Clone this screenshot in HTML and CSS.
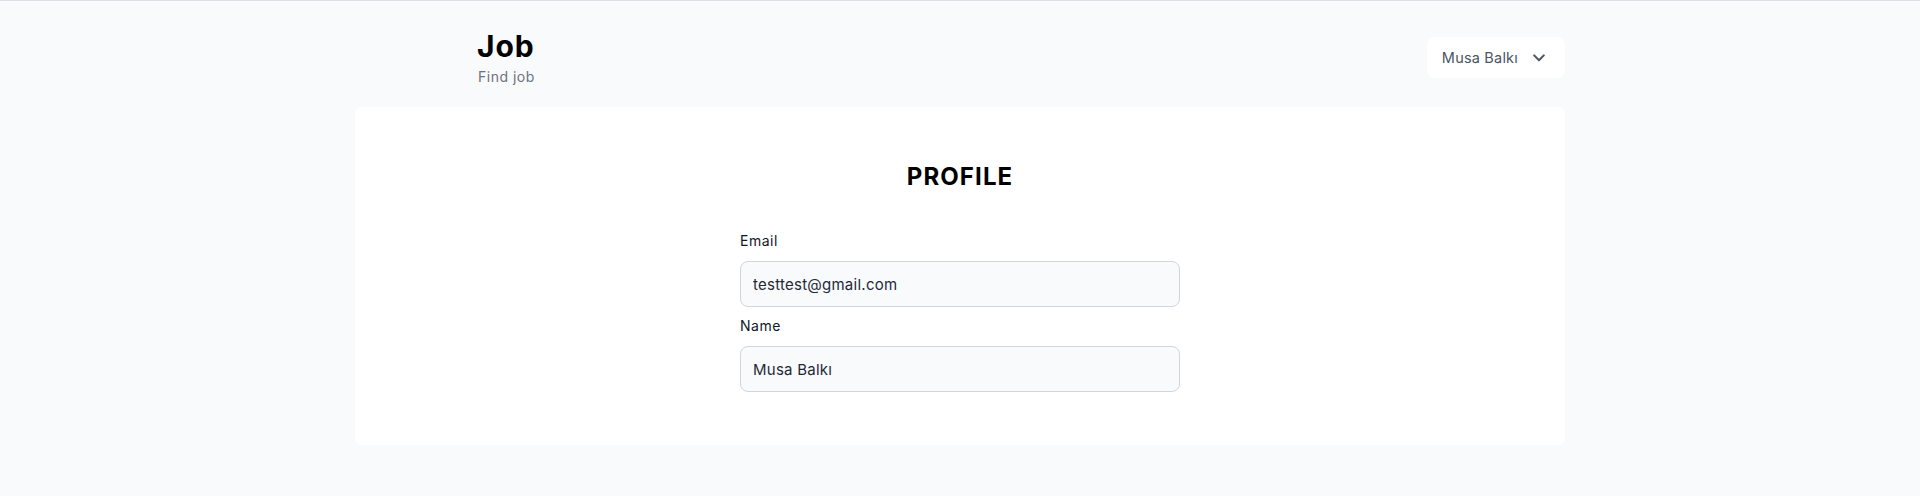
FILE: index.html
```html
<!DOCTYPE html>
<html lang="en">
<head>
<meta charset="utf-8">
<title>Job - Profile</title>
<link rel="stylesheet" href="styles.css">
</head>
<body>
<div class="page">
  <header class="header">
    <div class="brand">
      <h1 class="brand-title">Job</h1>
      <p class="brand-sub">Find job</p>
    </div>
    <button class="user-menu" type="button">
      <span>Musa Balkı</span>
      <svg class="chev" width="12" height="8" viewBox="0 0 12 8" aria-hidden="true"><path d="M1.2 1.4 6 6.2l4.8-4.8" fill="none" stroke="#4b5563" stroke-width="2" stroke-linecap="round" stroke-linejoin="round"/></svg>
    </button>
  </header>
  <main class="card">
    <h2 class="card-title">PROFILE</h2>
    <form class="form">
      <div class="field">
        <label class="label" for="email">Email</label>
        <input class="input" id="email" type="text" value="testtest@gmail.com">
      </div>
      <div class="field">
        <label class="label" for="name">Name</label>
        <input class="input" id="name" type="text" value="Musa Balkı">
      </div>
    </form>
  </main>
</div>
</body>
</html>
```
FILE: styles.css
```css
* { box-sizing: border-box; }
html, body { margin: 0; padding: 0; }
body {
  background: #f9fafb;
  border-top: 1px solid #dcdfe3;
  font-family: Inter, "Liberation Sans", sans-serif;
  color: #111827;
  min-height: 496px;
}
.page {
  width: 1210px;
  margin: 0 auto;
}
.header {
  display: flex;
  justify-content: space-between;
  align-items: center;
  padding: 26px 0 20px 122px;
}
.brand-title {
  margin: 0;
  font-size: 30px;
  line-height: 38px;
  font-weight: 700;
  letter-spacing: 0.9px;
  color: #000;
}
.brand-sub {
  margin: 2px 0 0 1px;
  font-size: 14px;
  line-height: 20px;
  letter-spacing: 0.5px;
  color: #6b7280;
}
.user-menu {
  display: flex;
  align-items: center;
  gap: 15px;
  height: 41px;
  padding: 0 20px 0 15px;
  background: #fff;
  border: 0;
  border-radius: 8px;
  font-family: inherit;
  font-size: 14.5px;
  letter-spacing: 0.2px;
  color: #4b5563;
  margin-top: 1px;
}
.chev { display: block; margin-top: 1px; }
.card {
  background: #fff;
  border-radius: 6px;
  padding: 54px 0 53px;
  display: flex;
  flex-direction: column;
  align-items: center;
}
.card-title {
  margin: 0 0 38px;
  font-size: 24px;
  line-height: 32px;
  font-weight: 700;
  letter-spacing: 1.1px;
  color: #000;
}
.form {
  width: 440px;
  display: flex;
  flex-direction: column;
  gap: 9px;
}
.field {
  display: flex;
  flex-direction: column;
}
.label {
  font-size: 14px;
  line-height: 20px;
  font-weight: 400;
  letter-spacing: 0.5px;
  color: #111827;
  margin-bottom: 10px;
}
.input {
  height: 46px;
  padding: 0 12px;
  border: 1px solid #d1d5db;
  border-radius: 8px;
  background: #f9fafb;
  font-family: inherit;
  font-size: 15px;
  letter-spacing: 0.25px;
  color: #1f2937;
  outline: none;
}
```
